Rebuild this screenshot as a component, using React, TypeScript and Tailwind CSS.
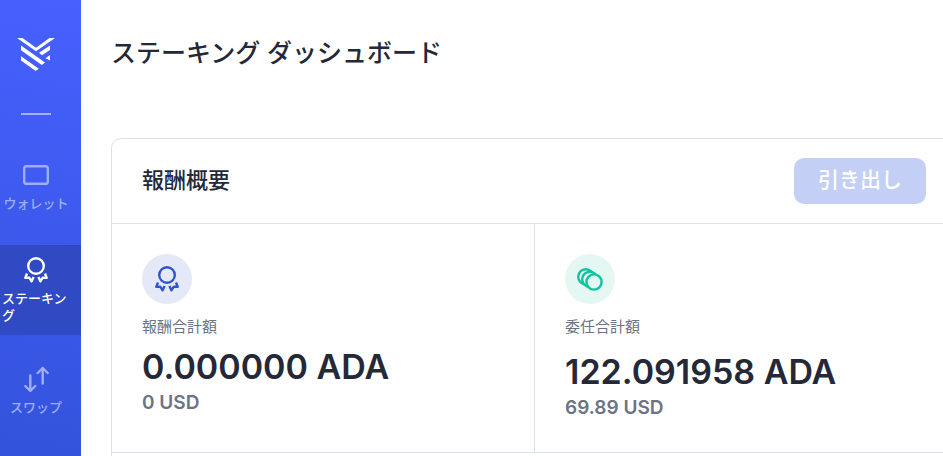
import type { ReactNode } from 'react';

function Logo() {
  return (
    <svg width="38" height="34" viewBox="0 0 38 34" fill="#fff" aria-hidden="true">
      <path d="M0 0h5.5L19 9.8 32.5 0H38L19 13.2z" />
      <path d="M4 7.5 28 24.5 24.8 27 4 12.2z" />
      <path d="M4 18.2 21.8 30.8 18.6 33 4 22.6z" />
      <path d="M22 14.8 33 7.5v4.4l-8 5.4z" />
      <path d="M28.5 20.3 33 17v5.6z" />
    </svg>
  );
}

function WalletIcon() {
  return (
    <svg width="26" height="20" viewBox="0 0 26 20" fill="none" stroke="currentColor" strokeWidth="2.4" aria-hidden="true">
      <rect x="1.2" y="1.2" width="23.6" height="17.6" rx="2.4" />
    </svg>
  );
}

function MedalIcon() {
  return (
    <svg width="24" height="26" viewBox="0 0 24 26" fill="none" stroke="currentColor" strokeWidth="2.4" strokeLinejoin="round" aria-hidden="true">
      <circle cx="12" cy="9" r="7.8" />
      <path d="M3 16.5 1.3 20.9l3.9-.2 2.4 3.6L9.6 20" />
      <path d="M21 16.5l1.7 4.4-3.9-.2-2.4 3.6L14.4 20" />
    </svg>
  );
}

function SwapIcon() {
  return (
    <svg width="26" height="26" viewBox="0 0 26 26" fill="none" stroke="currentColor" strokeWidth="2.4" strokeLinecap="round" strokeLinejoin="round" aria-hidden="true">
      <path d="M7.3 9.5v15.2M2.3 20l5 5 5-5" />
      <path d="M19.7 17.5V2M14.7 7l5-5 5 5" />
    </svg>
  );
}

function CoinsIcon() {
  return (
    <svg width="26" height="23" viewBox="0 0 26 23" fill="#e4f7f3" stroke="currentColor" strokeWidth="2.4" aria-hidden="true">
      <circle cx="8.8" cy="8.8" r="7.6" />
      <circle cx="12.8" cy="11.3" r="7.6" />
      <circle cx="17" cy="14" r="7.6" />
    </svg>
  );
}

type NavItemProps = {
  icon: ReactNode;
  label: string;
  active?: boolean;
};

function NavItem({ icon, label, active }: NavItemProps) {
  return (
    <a
      href="#"
      aria-current={active ? 'page' : undefined}
      className={`flex flex-col items-center gap-1.5 pt-[11px] pr-[11px] pb-[11px] pl-0.5 text-[13px] leading-[17px] font-medium ${
        active ? 'mt-[22px] mb-[19px] bg-[#304ac4] text-white' : 'text-[#a0aef8]'
      }`}
    >
      <span className="flex h-7 items-center">{icon}</span>
      <span>{label}</span>
    </a>
  );
}

type StatProps = {
  icon: ReactNode;
  label: string;
  amount: string;
  fiat: string;
  iconClass: string;
  amountClass: string;
};

function Stat({ icon, label, amount, fiat, iconClass, amountClass }: StatProps) {
  return (
    <div className="h-[228px] p-[30px]">
      <div className={`flex size-[50px] items-center justify-center rounded-full ${iconClass}`}>
        {icon}
      </div>
      <p className="mt-[13px] text-[15px] leading-5 text-[#6b7384]">{label}</p>
      <p className={`text-[34px] leading-10 font-semibold whitespace-nowrap ${amountClass}`}>{amount}</p>
      <p className="mt-1 text-[19px] leading-6 font-semibold text-[#6b7384]">{fiat}</p>
    </div>
  );
}

export default function App() {
  return (
    <div
      lang="ja"
      className="flex h-screen overflow-hidden bg-white font-['Inter','Noto_Sans_CJK_JP',sans-serif] text-[#242838]"
    >
      <nav className="w-[81px] shrink-0 bg-linear-[190deg,#4760ff,#3353db]">
        <a href="#" aria-label="ホーム" className="flex justify-center pt-[38px] pr-[9px]">
          <Logo />
        </a>
        <hr className="mt-[41px] mb-[35px] ml-[21px] w-[30px] border-t-2 border-[#a3b2f8]" />
        <div className="flex flex-col">
          <NavItem icon={<WalletIcon />} label="ウォレット" />
          <NavItem icon={<MedalIcon />} label="ステーキング" active />
          <NavItem icon={<SwapIcon />} label="スワップ" />
        </div>
      </nav>

      <main className="min-w-0 flex-1 pl-[30px]">
        <h1 className="pt-[33px] text-[25px] leading-10 font-medium">ステーキング ダッシュボード</h1>

        <section className="mt-[65px] -mr-4 h-screen rounded-tl-[10px] border border-[#dbe0e9]">
          <header className="flex h-[85px] items-center justify-between border-b border-[#dbe0e9] pr-8 pl-[30px]">
            <h2 className="pb-0.5 text-[22px] font-medium">報酬概要</h2>
            <button
              type="button"
              disabled
              className="h-[46px] w-[132px] rounded-[10px] bg-[#c4cff5] pb-0.5 text-[21px] font-medium text-white"
            >
              引き出し
            </button>
          </header>
          <div className="grid grid-cols-2 divide-x divide-[#dbe0e9] border-b border-[#dbe0e9]">
            <Stat
              icon={<MedalIcon />}
              label="報酬合計額"
              amount="0.000000 ADA"
              fiat="0 USD"
              iconClass="bg-[#e4e8f7] text-[#3154cb]"
              amountClass="mt-2.5"
            />
            <Stat
              icon={<CoinsIcon />}
              label="委任合計額"
              amount="122.091958 ADA"
              fiat="69.89 USD"
              iconClass="bg-[#e4f7f3] text-[#10c49d]"
              amountClass="mt-[15px]"
            />
          </div>
        </section>
      </main>
    </div>
  );
}
